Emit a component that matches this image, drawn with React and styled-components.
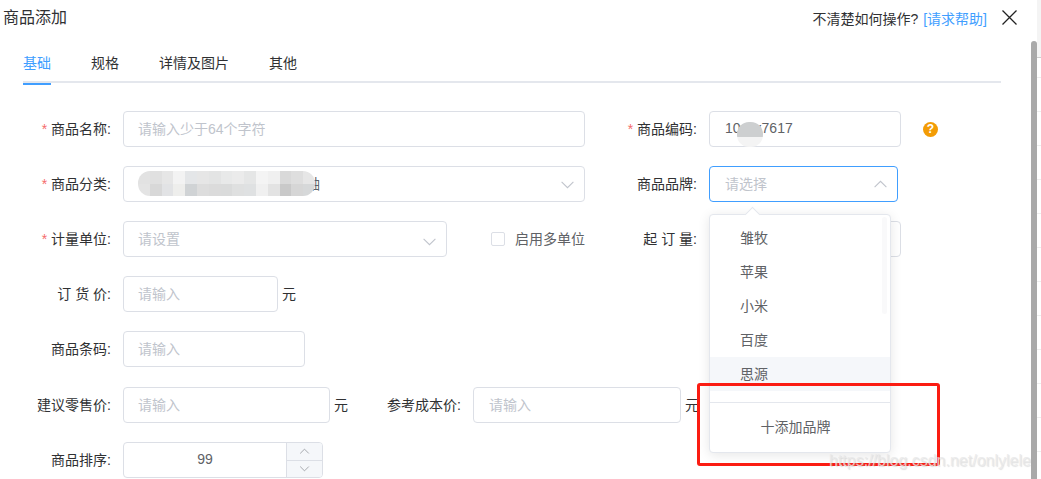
import React from 'react';
import styled, { createGlobalStyle } from 'styled-components';

const Global = createGlobalStyle`
  html, body { margin: 0; padding: 0; background: #fff; overflow: hidden; }
  * { box-sizing: border-box; }
  body { font-family: "Liberation Sans", "Noto Sans CJK SC", sans-serif; font-size: 14px; color: #303133; }
`;

const Page = styled.div`
  position: relative;
  width: 1041px;
  height: 479px;
  overflow: hidden;
`;
const Header = styled.header`
  display: flex;
  justify-content: space-between;
  align-items: center;
  height: 35px;
  padding: 0 24px 0 3px;
`;
const Title = styled.h1`
  margin: 0;
  font-size: 16px;
  font-weight: 400;
  line-height: 20px;
  color: #303133;
`;
const HelpArea = styled.div`
  display: flex;
  align-items: center;
  gap: 15px;
  color: #303133;
`;
const HelpLink = styled.span`
  margin-left: 1px;
  color: #409eff;
`;
const CloseButton = styled.svg`
  width: 15px;
  height: 15px;
  display: block;
`;
const Tabs = styled.nav`
  display: flex;
  gap: 40px;
  width: 978px;
  height: 48px;
  margin: 0 0 0 23px;
  padding-top: 18px;
  border-bottom: 2px solid #e4e7ed;
`;
const Tab = styled.div`
  position: relative;
  height: 30px;
  line-height: 20px;
  color: ${p => (p.$active ? '#409eff' : '#303133')};
  ${p => p.$active && `
    &::after {
      content: "";
      position: absolute;
      left: 0; right: 0; bottom: -2px;
      height: 2px;
      background: #409eff;
    }
  `}
`;
const Form = styled.form`
  display: flex;
  flex-direction: column;
  gap: 19px;
  margin-top: 28px;
`;
const Row = styled.div`
  display: flex;
  align-items: center;
  height: 36px;
  margin-top: ${p => p.$extra || 0}px;
`;
const Label = styled.label`
  flex: none;
  width: ${p => p.$w}px;
  margin-right: 12px;
  padding-bottom: 2px;
  text-align: right;
  white-space: pre;
  color: #303133;
`;
const Star = styled.span`
  color: #f56c6c;
  margin-right: 4px;
`;
const Box = styled.div`
  position: relative;
  flex: none;
  display: flex;
  align-items: center;
  justify-content: space-between;
  width: ${p => p.$w}px;
  height: 36px;
  padding: 0 ${p => (p.$select ? 9 : 15)}px 2px ${p => (p.$tight ? 14 : 15)}px;
  background: #fff;
  border: 1px solid ${p => (p.$focus ? '#409eff' : '#dcdfe6')};
  border-radius: 4px;
  color: ${p => (p.$filled ? '#606266' : '#c0c4cc')};
`;
const Unit = styled.span`
  margin-left: 4px;
  padding-bottom: 2px;
  color: #303133;
`;
const Chevron = styled.svg`
  display: block;
  flex: none;
  width: ${p => p.$s || 15}px;
  height: ${p => p.$s || 15}px;
  margin-top: ${p => p.$dy ?? 2}px;
  fill: none;
  stroke: ${p => p.$c || '#c0c4cc'};
  stroke-width: 1;
  transform: ${p => (p.$up ? 'rotate(180deg)' : 'none')};
`;
const Down = props => (
  <Chevron viewBox="0 0 14 14" {...props}><polyline points="1.5,4.5 7,10 12.5,4.5" /></Chevron>
);
const Hint = styled.span`
  flex: none;
  width: 15px;
  height: 15px;
  margin-left: 22px;
  border-radius: 50%;
  background: #f39c05;
  color: #fff;
  font-size: 12px;
  font-weight: 700;
  line-height: 15px;
  text-align: center;
`;
const Check = styled.span`
  flex: none;
  width: 14px;
  height: 14px;
  margin: 0 10px 0 44px;
  border: 1px solid #dcdfe6;
  border-radius: 2px;
`;
const CheckText = styled.span`
  flex: none;
  width: 71px;
  padding-bottom: 2px;
  color: #606266;
`;
const NumberBox = styled.div`
  flex: none;
  display: flex;
  width: 200px;
  height: 36px;
  border: 1px solid #dcdfe6;
  border-radius: 4px;
  overflow: hidden;
  color: #606266;
`;
const NumberValue = styled.div`
  flex: 1;
  line-height: 32px;
  text-align: center;
`;
const Steppers = styled.div`
  flex: none;
  display: flex;
  flex-direction: column;
  width: 36px;
  background: #f5f7fa;
  border-left: 1px solid #dcdfe6;
`;
const Stepper = styled.div`
  flex: 1;
  display: flex;
  align-items: center;
  justify-content: center;
  & + & { border-top: 1px solid #dcdfe6; }
`;
const Mosaic = styled.div`
  position: absolute;
  left: 14px;
  top: 4px;
  width: 177px;
  height: 25px;
  display: grid;
  grid-template-columns: repeat(15, 1fr);
  grid-template-rows: repeat(2, 1fr);
  border-radius: 12px;
  overflow: hidden;
`;
const Cell = styled.i`
  display: block;
`;
const Smudge = styled.div`
  position: absolute;
  left: 27px;
  top: 10px;
  width: 26px;
  height: 25px;
  border-radius: 12px;
  background: linear-gradient(#cdcfd0 0 60%, #f4f4f4 60% 100%);
`;
const Dropdown = styled.div`
  position: absolute;
  left: 709px;
  top: 214px;
  width: 182px;
  height: 239px;
  background: #fff;
  border: 1px solid #e4e7ed;
  border-radius: 4px;
  box-shadow: 0 2px 12px rgba(0, 0, 0, .1);
  &::before {
    content: "";
    position: absolute;
    left: 37px;
    top: -6px;
    width: 10px;
    height: 10px;
    background: #fff;
    border: 1px solid #e4e7ed;
    border-right: 0;
    border-bottom: 0;
    transform: rotate(45deg);
  }
`;
const Options = styled.ul`
  position: relative;
  list-style: none;
  margin: 0;
  padding: 6px 0 0;
  height: 188px;
  border-bottom: 1px solid #e4e7ed;
`;
const Option = styled.li`
  height: 34px;
  line-height: 34px;
  padding-left: 30px;
  color: #606266;
  background: ${p => (p.$hover ? '#f5f7fa' : 'transparent')};
`;
const MiniBar = styled.span`
  position: absolute;
  right: 3px;
  top: 2px;
  width: 5px;
  height: 97px;
  border-radius: 3px;
  background: rgba(144, 147, 153, .05);
`;
const AddBrand = styled.div`
  height: 49px;
  line-height: 48px;
  padding-right: 9px;
  text-align: center;
  color: #606266;
`;
const BackdropEdge = styled.div`
  position: absolute;
  left: 1037px;
  top: 0;
  right: 0;
  bottom: 0;
  background: repeating-linear-gradient(to bottom, transparent 0 33px, #eeeeee 33px 34px) 0 44px no-repeat;
  &::before {
    content: "";
    display: block;
    height: 57px;
    background: #f4f4f4;
    border-bottom: 1px solid #cfcfcf;
  }
`;
const Scrollbar = styled.div`
  position: absolute;
  left: 1031px;
  top: 41px;
  width: 6px;
  bottom: 0;
  background: #a9a9a9;
  border-radius: 3px 3px 0 0;
`;
const Annotation = styled.div`
  position: absolute;
  left: 697px;
  top: 383px;
  width: 243px;
  height: 83px;
  border: 3px solid #fb1c12;
  border-radius: 3px;
  pointer-events: none;
`;
const Watermark = styled.div`
  position: absolute;
  left: 829px;
  top: 449px;
  font-size: 16px;
  line-height: 24px;
  color: rgba(232, 232, 232, .8);
  text-shadow: 1px 1px 1px rgba(170, 170, 170, .35);
  white-space: nowrap;
`;

const mosaicColours = [
  '#e2e2e2','#e0e0e0','#e6e6e6','#f3f3f3','#e4e6e8','#e6e6e6','#e3e4e4','#e8e9e9','#ebebeb','#e5e6e6','#f4f4f4','#f0f0f0','#d9d9d9','#dedede','#e6e6e6',
  '#e4e4e4','#d8d8d8','#e2e3e5','#eeeeec','#d0d3d5','#dddddd','#dbdbdb','#dadbdb','#dfe0e0','#dfe1e2','#f0f0f0','#e3e3e3','#c9c9c9','#d6d6d6','#d6d8d9',
];

const Req = () => <Star>*</Star>;

export default function App() {
  return (
    <Page>
      <Global />
      <Header>
        <Title>商品添加</Title>
        <HelpArea>
          <span>不清楚如何操作? <HelpLink>[请求帮助]</HelpLink></span>
          <CloseButton viewBox="0 0 15 15" fill="none" stroke="#222" strokeWidth="1.3">
            <path d="M.5.5l14 14M14.5.5l-14 14" />
          </CloseButton>
        </HelpArea>
      </Header>
      <Tabs>
        <Tab $active>基础</Tab>
        <Tab>规格</Tab>
        <Tab>详情及图片</Tab>
        <Tab>其他</Tab>
      </Tabs>
      <Form>
        <Row>
          <Label $w={111}><Req />商品名称:</Label>
          <Box $w={462} $tight>请输入少于64个字符</Box>
          <Label $w={112}><Req />商品编码:</Label>
          <Box $w={192} $filled>
            10xxx7617
            <Smudge />
          </Box>
          <Hint>?</Hint>
        </Row>
        <Row>
          <Label $w={111}><Req />商品分类:</Label>
          <Box $w={462} $filled $tight $select>
            <span>{'　'.repeat(12)}轴</span>
            <Mosaic>
              {mosaicColours.map((c, i) => <Cell key={i} style={{ background: c }} />)}
            </Mosaic>
            <Down />
          </Box>
          <Label $w={112}>商品品牌:</Label>
          <Box $w={189} $focus $select>
            请选择
            <Down $up />
          </Box>
        </Row>
        <Row>
          <Label $w={111}><Req />计量单位:</Label>
          <Box $w={324} $tight $select>
            请设置
            <Down $dy={6} />
          </Box>
          <Check />
          <CheckText>启用多单位</CheckText>
          <Label $w={111}>{'起 订 量:'}</Label>
          <Box $w={192} />
        </Row>
        <Row>
          <Label $w={111}>{'订 货 价:'}</Label>
          <Box $w={155} $tight>请输入</Box>
          <Unit>元</Unit>
        </Row>
        <Row>
          <Label $w={111}>商品条码:</Label>
          <Box $w={182} $tight>请输入</Box>
        </Row>
        <Row $extra={1}>
          <Label $w={111}>建议零售价:</Label>
          <Box $w={207} $tight>请输入</Box>
          <Unit>元</Unit>
          <Label $w={113}>参考成本价:</Label>
          <Box $w={208}>请输入</Box>
          <Unit>元</Unit>
        </Row>
        <Row>
          <Label $w={111}>商品排序:</Label>
          <NumberBox>
            <NumberValue>99</NumberValue>
            <Steppers>
              <Stepper><Down $up $s={11} $dy={0} $c="#909399" /></Stepper>
              <Stepper><Down $s={11} $dy={0} $c="#909399" /></Stepper>
            </Steppers>
          </NumberBox>
        </Row>
      </Form>
      <Dropdown>
        <Options>
          <Option>雏牧</Option>
          <Option>苹果</Option>
          <Option>小米</Option>
          <Option>百度</Option>
          <Option $hover>思源</Option>
          <MiniBar />
        </Options>
        <AddBrand>十添加品牌</AddBrand>
      </Dropdown>
      <BackdropEdge />
      <Scrollbar />
      <Annotation />
      <Watermark>https://blog.csdn.net/onlylele</Watermark>
    </Page>
  );
}
